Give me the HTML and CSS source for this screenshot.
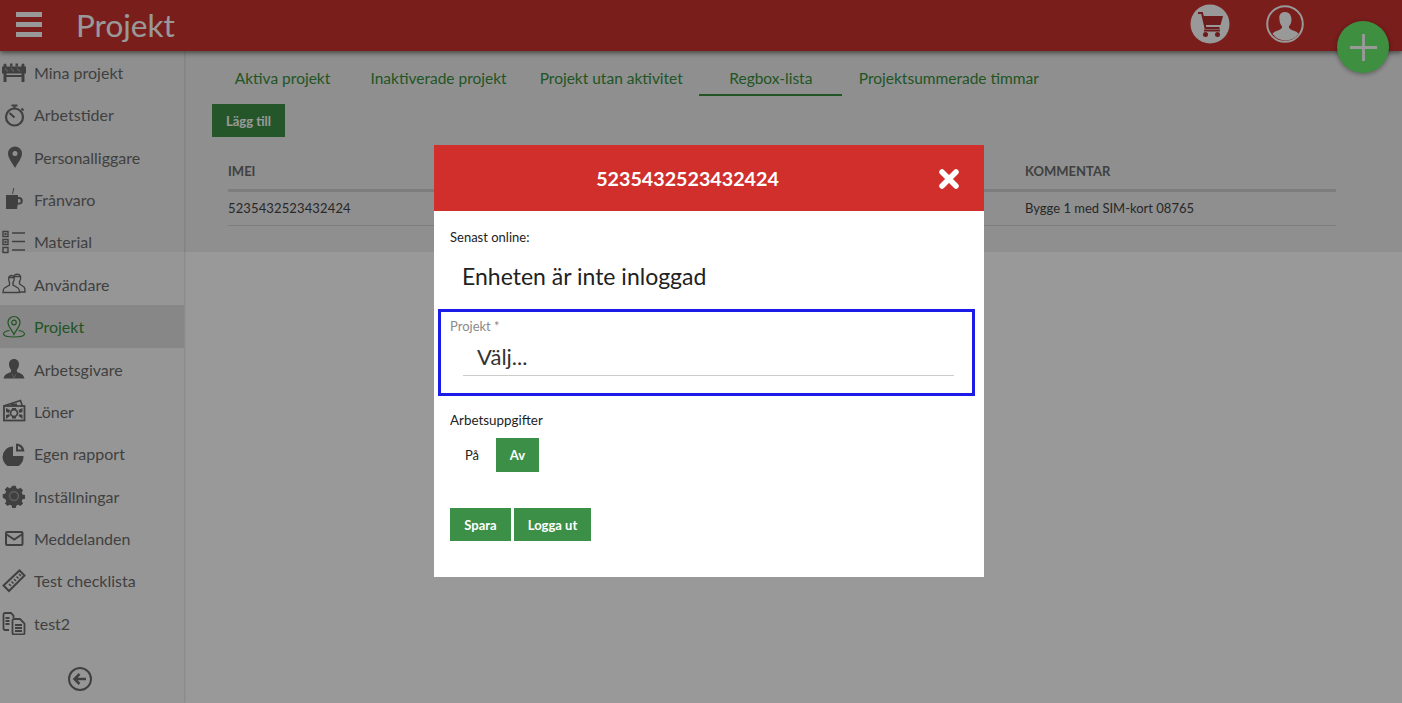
FILE: index.html
```html
<!DOCTYPE html>
<html lang="sv">
<head>
  <meta charset="UTF-8">
  <meta name="viewport" content="width=device-width, initial-scale=1.0">
  <title>Projekt</title>
  <link rel="stylesheet" href="styles.css">
</head>

<body>
  <header class="topbar">
    <button class="burger" aria-label="Meny"><span></span><span></span><span></span></button>
    <h1 class="page-title">Projekt</h1>
    <div class="topbar-icons">
      <svg class="cart-icon" viewBox="0 0 40 40">
        <circle cx="20" cy="20" r="19.500" fill="#fff"/>
        <path d="M8 9h4l3.500 15h14" fill="none" stroke="#b5302c" stroke-width="2"/>
        <path d="M13 12h20l-2.500 9H15z" fill="#b5302c"/>
        <path d="M14 26.500h16" stroke="#b5302c" stroke-width="2"/>
        <circle cx="15.500" cy="30.500" r="2.500" fill="#b5302c"/>
        <circle cx="27.500" cy="30.500" r="2.500" fill="#b5302c"/>
      </svg>
      <svg class="user-icon" viewBox="0 0 38 38">
        <circle cx="19" cy="19" r="17.800" fill="none" stroke="#fff" stroke-width="2"/>
        <path d="M19 7c4 0 6.500 3 6.500 7.500 0 3-1.200 5.500-2.700 7 .2 2 1.200 2.800 3.700 3.700 3 1 5 2 6 3.500a15.800 15.800 0 0 1-26 0c1-1.500 3-2.500 6-3.500 2.500-.9 3.500-1.700 3.700-3.700-1.500-1.500-2.700-4-2.700-7C12.500 10 15 7 19 7z" fill="#fff"/>
      </svg>
    </div>
  </header>

  <div class="layout">
    <nav class="sidebar">
      <ul class="side-list">
        <li class="side-item">
          <svg viewBox="0 0 24 24"><path d="M3 3.500a1.500 1.500 0 0 1 1.500 1.500v1.500h15V5a1.500 1.500 0 0 1 3 0v1.500H24v7h-1.500v8.500h-3v-5h-15v5h-3v-8.500H0v-7h1.500V5A1.500 1.500 0 0 1 3 3.500zM4.500 13.500V15h15v-1.500z" fill="currentColor" fill-rule="evenodd"/><path d="M8 3.500h2.500v3H8zM13.500 3.500H16v3h-2.500z" fill="currentColor"/><path d="M3 8.500l3 3M9 8.500l3 3M15 8.500l3 3" stroke="#999" stroke-width="1.500"/></svg>
          Mina projekt
        </li>
        <li class="side-item">
          <svg viewBox="0 0 24 24"><circle cx="12.500" cy="14" r="8.500" fill="none" stroke="currentColor" stroke-width="2.200"/><path d="M9.500 2.500h6M12.500 3v3M19.500 5.500l2 2M7.500 10l5 4.500" stroke="currentColor" stroke-width="2" fill="none"/></svg>
          Arbetstider
        </li>
        <li class="side-item">
          <svg viewBox="0 0 24 24"><path d="M13 1.500a7 7 0 0 1 7 7c0 4.500-4 9-7 14.500-3-5.500-7-10-7-14.500a7 7 0 0 1 7-7zm0 4.500a2.500 2.500 0 1 0 0 5 2.500 2.500 0 0 0 0-5z" fill="currentColor" fill-rule="evenodd"/></svg>
          Personalliggare
        </li>
        <li class="side-item">
          <svg viewBox="0 0 24 24"><path d="M4 8h12v2h1a3.800 3.800 0 0 1 0 7.600h-1.300L15 22H4zm12 4v3.800h.8a1.900 1.900 0 0 0 0-3.800z" fill="currentColor" fill-rule="evenodd"/><path d="M11 7c-1.500-2 1.500-3 .5-6" stroke="currentColor" stroke-width="1" fill="none"/></svg>
          Frånvaro
        </li>
        <li class="side-item">
          <svg viewBox="0 0 24 24"><path d="M1 1.500h5v5H1zM1 9.500h5v5H1zM1 17.500h5v5H1z" fill="none" stroke="currentColor" stroke-width="1.400"/><path d="M2.500 3h2v2h-2zM2.500 11h2v2h-2z" fill="currentColor"/><path d="M10 3h13M10 11.500h13M10 20h13" stroke="currentColor" stroke-width="1.300"/></svg>
          Material
        </li>
        <li class="side-item">
          <svg viewBox="0 0 24 24"><g fill="none" stroke="currentColor" stroke-width="1.400"><path d="M7 5c1-2 4-2 5 0 .5 2 0 4-1 5.500V13l5 3c1.500 1 1.500 2.500 1.500 4.500H1c0-2 0-3.500 1.500-4.500l5-3v-2.500C6.500 9 6.500 7 7 5z"/><path d="M12 4c1-2 5-2.500 6.500 0 .5 2 0 4-1 5.500V12l4.500 3c1 .8 1 2.500 1 5h-5"/><path d="M6.500 5.500h6M12 4.500h6.500"/></g></svg>
          Användare
        </li>
        <li class="side-item is-active">
          <svg viewBox="0 0 24 24"><g fill="none" stroke="currentColor" stroke-width="1.200"><path d="M12 1.500a6 6 0 0 1 6 6c0 4-4 7.500-6 12-2-4.500-6-8-6-12a6 6 0 0 1 6-6z"/><circle cx="12" cy="7.500" r="2.300"/><path d="M7.500 15.500C4 16 1.500 17.500 1.500 19c0 2 4.500 3 10.500 3s10.500-1 10.500-3c0-1.500-2.500-3-6-3.500"/></g></svg>
          Projekt
        </li>
        <li class="side-item">
          <svg viewBox="0 0 24 24"><path d="M12 2c3.300 0 5 2.300 5 5.300 0 2.200-1 4.400-2.200 5.700l.4 2.300c2.800.8 6.300 2 7.300 6.200H1.500c1-4.200 4.500-5.400 7.300-6.200l.4-2.300C8 11.700 7 9.500 7 7.300 7 4.300 8.700 2 12 2z" fill="currentColor"/><path d="M10 17l2 4 2-4" stroke="#999" stroke-width="1" fill="none"/></svg>
          Arbetsgivare
        </li>
        <li class="side-item">
          <svg viewBox="0 0 24 24"><path d="M1.500 7l17-5.500 2 6" fill="none" stroke="currentColor" stroke-width="1.600"/><rect x="2" y="7" width="20.500" height="14.500" fill="none" stroke="currentColor" stroke-width="1.800"/><circle cx="12" cy="14" r="3.500" fill="none" stroke="currentColor" stroke-width="1.800"/><path d="M4 9l4 2-1 3-3-1zM20.500 9l-4 2 1 3 3-1zM4 20l4-3-1-2-3 1zM20.500 20l-4-3 1-2 3 1zM9 4.500h6V7H9zM10 9h4v1.500h-4zM10 18h4v1.500h-4z" fill="currentColor"/></svg>
          Löner
        </li>
        <li class="side-item">
          <svg viewBox="0 0 24 24"><path d="M11 4.500V14h10.500A10.500 10.500 0 1 1 11 4.500z" fill="currentColor"/><path d="M14 1.500V9.500h8.500a8.500 8 0 0 0-8.500-8zM16 3.800v3.700h3.700a6 6 0 0 0-3.700-3.700z" fill="currentColor" fill-rule="evenodd"/></svg>
          Egen rapport
        </li>
        <li class="side-item">
          <svg viewBox="0 0 26 26"><path d="M11 2h4l.6 2.600 2 .9 2.400-1.400 2.800 2.800-1.400 2.400.9 2 2.700.7v4l-2.700.6-.9 2 1.400 2.400-2.800 2.800-2.400-1.400-2 .9-.6 2.700h-4l-.6-2.700-2-.9-2.400 1.400-2.800-2.800 1.400-2.400-.9-2L.8 15v-4l2.700-.7.9-2L3 5.900l2.800-2.800 2.400 1.400 2-.9z" fill="currentColor"/><circle cx="13" cy="13" r="4.800" fill="none" stroke="#999" stroke-width="1.800"/></svg>
          Inställningar
        </li>
        <li class="side-item">
          <svg viewBox="0 0 24 24"><rect x="4" y="5" width="16.500" height="13" rx="1" fill="none" stroke="currentColor" stroke-width="2"/><path d="M4 7l8.200 5.500L20.500 7" fill="none" stroke="currentColor" stroke-width="2"/></svg>
          Meddelanden
        </li>
        <li class="side-item">
          <svg viewBox="0 0 24 24"><path d="M17.500 1.500l5 5L7 22l-5.500-5.500z" fill="none" stroke="currentColor" stroke-width="2"/><path d="M17 5l2 2M14.500 7.500l2 2M12 10l2 2M9.500 12.500l2 2M7 15l2 2" stroke="currentColor" stroke-width="1.500"/></svg>
          Test checklista
        </li>
        <li class="side-item">
          <svg viewBox="0 0 24 24"><path d="M7 19H3a1.500 1.500 0 0 1-1.500-1.500v-14A1.500 1.500 0 0 1 3 2h6l2.500 2.500V7" fill="none" stroke="currentColor" stroke-width="1.800"/><path d="M12 8h6l4.500 4.500V22a1.500 1.500 0 0 1-1.500 1.500h-9a1.500 1.500 0 0 1-1.500-1.500V9.500A1.500 1.500 0 0 1 12 8z" fill="none" stroke="currentColor" stroke-width="1.800"/><path d="M13 14h7M13 17h7M13 20h7M3.500 7h4M3.500 10h4M3.500 13h4" stroke="currentColor" stroke-width="1.800"/></svg>
          test2
        </li>
      </ul>
      <div class="side-collapse">
        <svg viewBox="0 0 24 24"><circle cx="12" cy="12" r="11" fill="none" stroke="currentColor" stroke-width="2"/><path d="M18 12H7M11.500 7L6.500 12l5 5" fill="none" stroke="currentColor" stroke-width="2.500"/></svg>
      </div>
    </nav>

    <main class="content">
      <section class="panel">
        <div class="tabs">
          <a class="tab">Aktiva projekt</a>
          <a class="tab">Inaktiverade projekt</a>
          <a class="tab">Projekt utan aktivitet</a>
          <a class="tab is-active">Regbox-lista</a>
          <a class="tab">Projektsummerade timmar</a>
        </div>
        <button class="btn btn-add">Lägg till</button>
        <table class="data-table">
          <thead>
            <tr><th>IMEI</th><th>Kommentar</th></tr>
          </thead>
          <tbody>
            <tr><td>5235432523432424</td><td>Bygge 1 med SIM-kort 08765</td></tr>
          </tbody>
        </table>
      </section>
    </main>
  </div>

  <div class="overlay"></div>

  <button class="fab" aria-label="Lägg till">
    <svg viewBox="0 0 30 30"><path d="M15 1v28M1 15h28" stroke="#999" stroke-width="3"/></svg>
  </button>

  <div class="modal">
    <div class="modal-head">
      <h2>5235432523432424</h2>
      <svg class="modal-close" viewBox="0 0 22 22"><path d="M4 4l14 14M18 4L4 18" stroke="#fff" stroke-width="5.500" stroke-linecap="round"/></svg>
    </div>
    <div class="modal-body">
      <p class="small-label">Senast online:</p>
      <p class="status">Enheten är inte inloggad</p>
      <div class="highlight">
        <label class="field-label">Projekt *</label>
        <div class="select">Välj...</div>
      </div>
      <p class="small-label tasks-label">Arbetsuppgifter</p>
      <div class="toggle">
        <span class="toggle-off">På</span>
        <span class="btn">Av</span>
      </div>
      <div class="actions">
        <button class="btn btn-save">Spara</button>
        <button class="btn btn-logout">Logga ut</button>
      </div>
    </div>
  </div>
</body>
</html>
```

FILE: styles.css
```css
/* Base styles */
* {
  box-sizing: border-box;
}

html,
body {
  height: 100%;
}

body {
  margin: 0;
  overflow: hidden;
  background: #fff;
  color: #222;
  font-family: Lato, "Open Sans", sans-serif;
  font-size: 13px;
}

/* Top bar */
.topbar {
  position: relative;
  z-index: 2;
  display: flex;
  align-items: center;
  height: 51px;
  padding-left: 16px;
  background: #cb3230;
  box-shadow: 0 2px 5px rgba(0, 0, 0, 0.5);
  color: #fff;
}

.burger {
  all: unset;
  display: flex;
  flex-direction: column;
  gap: 5px;
  width: 26px;
  margin-top: -2px;
}

.burger span {
  height: 5px;
  background: #fff;
}

.page-title {
  margin: -2px 0 0 34px;
  font-size: 31.5px;
  font-weight: 400;
}

.topbar-icons {
  display: flex;
  align-items: center;
  gap: 36px;
  margin-left: auto;
  margin-right: 98px;
  margin-top: -4px;
}

.cart-icon {
  width: 40px;
  height: 40px;
}

.user-icon {
  width: 38px;
  height: 38px;
}

/* Layout */
.layout {
  display: flex;
  height: calc(100% - 51px);
}

.sidebar {
  position: relative;
  z-index: 1;
  flex: none;
  width: 184px;
  background: linear-gradient(#eee 201px, #fbfbfb 201px);
  box-shadow: 1px 0 2px rgba(0, 0, 0, 0.12);
  color: #6c6c6c;
}

.side-list {
  margin: 0;
  padding: 0.1px 0 0;
  list-style: none;
}

.side-item {
  display: flex;
  align-items: center;
  gap: 8px;
  height: 42.4px;
  padding-left: 2px;
  font-size: 16px;
}

.side-item svg {
  flex: none;
  width: 24px;
  height: 24px;
}

.side-item.is-active {
  background: rgba(0, 0, 0, 0.1);
  color: #388e3c;
}

.side-collapse {
  margin: 22px 0 0 68px;
}

.side-collapse svg {
  width: 24px;
  height: 24px;
}

/* Content */
.content {
  flex: 1;
}

.panel {
  height: 201px;
  padding: 6px 66px 0 27px;
  background: #eee;
}

.tabs {
  display: flex;
  margin-bottom: 8px;
}

.tab {
  min-width: 143px;
  height: 39px;
  padding: 0 16.5px;
  line-height: 42px;
  text-align: center;
  font-size: 15.5px;
  color: #388e3c;
}

.tab.is-active {
  border-bottom: 2px solid #388e3c;
}

.btn {
  all: unset;
  display: inline-flex;
  align-items: center;
  justify-content: center;
  height: 33px;
  background: #3c8f47;
  color: #fff;
  font-size: 13px;
  font-weight: 700;
}

.btn-add {
  display: flex;
  width: 73px;
  margin-left: 1px;
}

.data-table {
  width: 1108px;
  margin: 18px 0 0 17px;
  border-collapse: collapse;
  font-size: 13px;
}

.data-table th {
  height: 35px;
  padding: 0 0 1px;
  border-bottom: 3px solid #d0d0d0;
  color: #6c6c6c;
  text-align: left;
  text-transform: uppercase;
  font-size: 13px;
}

.data-table td {
  height: 35px;
  padding: 0;
  border-bottom: 1px solid #d0d0d0;
  color: #444;
}

.data-table th:first-child,
.data-table td:first-child {
  width: 797px;
}

.data-table td:first-child {
  letter-spacing: 0.13px;
}

/* Dialog */
.overlay {
  position: fixed;
  inset: 0;
  z-index: 5;
  background: rgba(0, 0, 0, 0.4);
}

.fab {
  all: unset;
  position: fixed;
  top: 21px;
  left: 1337px;
  z-index: 6;
  display: flex;
  align-items: center;
  justify-content: center;
  width: 52px;
  height: 52px;
  border-radius: 50%;
  background: #3f8f41;
  box-shadow: 0 1px 5px rgba(0, 0, 0, 0.4);
}

.fab svg {
  width: 29px;
  height: 29px;
}

.modal {
  position: fixed;
  top: 145px;
  left: 434px;
  z-index: 6;
  width: 550px;
  height: 432px;
  background: #fff;
}

.modal-head {
  position: relative;
  display: flex;
  align-items: center;
  justify-content: center;
  height: 66px;
  padding-right: 43px;
  background: #d02f2c;
  color: #fff;
}

.modal-head h2 {
  margin: 0;
  font-size: 19.7px;
  font-weight: 700;
}

.modal-close {
  position: absolute;
  top: 23px;
  right: 24px;
  width: 22px;
  height: 22px;
}

.modal-body {
  padding: 18px 9px 0 16px;
}

.small-label {
  margin: 0;
  line-height: 16px;
  font-size: 13px;
  color: #222;
}

.status {
  margin: 15px 0 0 12px;
  line-height: 32px;
  font-size: 23px;
  color: #222;
}

.highlight {
  height: 87px;
  margin: 17px 0 0 -12px;
  padding: 6px 9px 0 9px;
  border: 3px solid #1c1ce8;
}

.field-label {
  display: block;
  line-height: 16px;
  color: #8a8a8a;
}

.select {
  height: 35px;
  margin: 7px 9px 0 13px;
  padding-left: 14px;
  border-bottom: 1px solid #ccc;
  line-height: 32px;
  font-size: 22px;
  color: #333;
}

.tasks-label {
  margin-top: 16px;
  font-size: 13.4px;
}

.toggle {
  display: flex;
  align-items: center;
  margin-top: 10px;
}

.toggle-off {
  width: 46px;
  padding-right: 2px;
  text-align: center;
  color: #222;
}

.toggle .btn {
  width: 43px;
  height: 34px;
}

.actions {
  display: flex;
  gap: 3px;
  margin-top: 36px;
}

.btn-save {
  width: 61px;
}

.btn-logout {
  width: 77px;
}
```
